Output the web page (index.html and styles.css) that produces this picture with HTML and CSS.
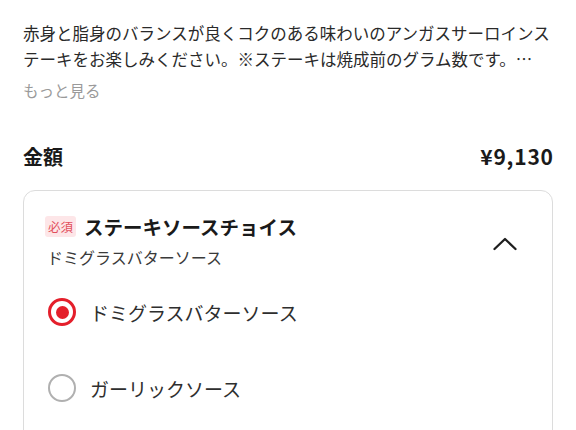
FILE: index.html
```html
<!DOCTYPE html>
<html lang="ja">
<head>
<meta charset="utf-8">
<link rel="stylesheet" href="styles.css">
</head>
<body>
<div class="page">
  <p class="desc">赤身と脂身のバランスが良くコクのある味わいのアンガスサーロインス<br>テーキをお楽しみください。※ステーキは焼成前のグラム数です。…</p>
  <div class="more">もっと見る</div>
  <div class="amount-row">
    <span class="amount-label">金額</span>
    <span class="amount-value">¥9,130</span>
  </div>
  <section class="card">
    <div class="card-head">
      <div class="head-text">
        <div class="title-row">
          <span class="badge">必須</span>
          <span class="title">ステーキソースチョイス</span>
        </div>
        <div class="subtitle">ドミグラスバターソース</div>
      </div>
      <svg class="chevron" width="26" height="15" viewBox="0 0 26 15" aria-hidden="true">
        <polyline points="2.5,13 13,3 23.5,13" fill="none" stroke="#1e1e1e" stroke-width="2.3" stroke-linecap="round" stroke-linejoin="round"/>
      </svg>
    </div>
    <div class="options">
      <label class="option">
        <span class="radio checked"></span>
        <span class="option-label">ドミグラスバターソース</span>
      </label>
      <label class="option">
        <span class="radio"></span>
        <span class="option-label">ガーリックソース</span>
      </label>
    </div>
  </section>
</div>
</body>
</html>
```

FILE: styles.css
```css
* {
  box-sizing: border-box;
}

html, body {
  margin: 0;
  padding: 0;
  background: #fff;
}

body {
  font-family: "Noto Sans CJK JP", "Noto Sans", sans-serif;
  color: #222;
}

.page {
  width: 576px;
  padding: 20px 23px 0 23px;
}

.desc {
  margin: 0;
  font-size: 16.5px;
  line-height: 26px;
  color: #2a2a2a;
  white-space: nowrap;
}

.more {
  margin-top: 7px;
  font-size: 15.5px;
  line-height: 22px;
  color: #9a9a9a;
}

.amount-row {
  margin-top: 41px;
  display: flex;
  justify-content: space-between;
  align-items: center;
  height: 28px;
}

.amount-label {
  font-size: 20px;
  font-weight: 700;
  color: #1a1a1a;
}

.amount-value {
  font-size: 21px;
  font-weight: 700;
  color: #1a1a1a;
  letter-spacing: 0.8px;
  margin-right: -0.8px;
}

.card {
  margin-top: 20px;
  border: 1px solid #dcdcdc;
  border-radius: 12px;
  height: 260px;
}

.card-head {
  display: flex;
  justify-content: space-between;
  align-items: center;
  padding: 20px 34px 0 21px;
}

.title-row {
  display: flex;
  align-items: center;
  gap: 8px;
  height: 30px;
}

.badge {
  display: inline-flex;
  align-items: center;
  justify-content: center;
  width: 31px;
  height: 21px;
  background: #fde6e8;
  color: #e2505c;
  font-size: 12.5px;
  border-radius: 3px;
}

.title {
  font-size: 19.5px;
  font-weight: 700;
  color: #1a1a1a;
}

.subtitle {
  margin-top: 5px;
  font-size: 16px;
  line-height: 22px;
  color: #3a3a3a;
  padding-left: 2px;
}

.chevron {
  margin-top: 8px;
}

.options {
  padding: 6px 0 0 24px;
}

.option {
  display: flex;
  align-items: center;
  gap: 14px;
  height: 76px;
}

.radio {
  width: 28px;
  height: 28px;
  border-radius: 50%;
  border: 2.5px solid #b0b0b0;
  display: flex;
  align-items: center;
  justify-content: center;
}

.radio.checked {
  border: 3px solid #e41f2b;
}

.radio.checked::after {
  content: "";
  width: 13px;
  height: 13px;
  border-radius: 50%;
  background: #e41f2b;
}

.option-label {
  font-size: 19px;
  color: #2e2e2e;
}
```
